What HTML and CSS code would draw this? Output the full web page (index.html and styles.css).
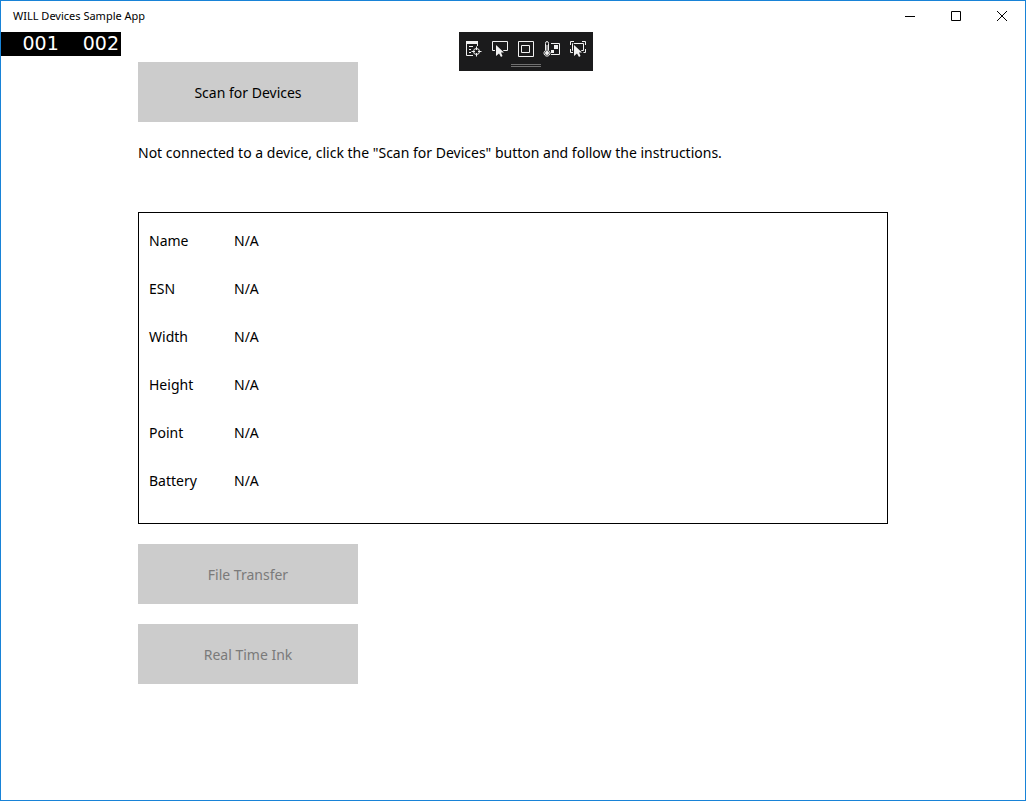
FILE: index.html
```html
<!DOCTYPE html>
<html lang="en">
<head>
<meta charset="utf-8">
<meta name="viewport" content="width=device-width, initial-scale=1">
<title>WILL Devices Sample App</title>
<link rel="stylesheet" href="styles.css">
</head>
<body>
<div class="window">
  <header class="titlebar">
    <h1 class="title">WILL Devices Sample App</h1>
    <div class="captions">
      <button class="caption" type="button" aria-label="Minimize">
        <svg width="10" height="10" viewBox="0 0 10 10"><path d="M0 5.5H10"/></svg>
      </button>
      <button class="caption" type="button" aria-label="Maximize">
        <svg width="10" height="10" viewBox="0 0 10 10"><path d="M.5 .5H9.5V9.5H.5Z"/></svg>
      </button>
      <button class="caption" type="button" aria-label="Close">
        <svg width="10" height="10" viewBox="0 0 10 10"><path d="M0 0L10 10M10 0L0 10"/></svg>
      </button>
    </div>
  </header>

  <div class="client">
    <div class="counters"><span>001</span><span>002</span></div>

    <div class="debugbar">
      <div class="tools">
        <button class="tool" type="button" aria-label="Go to live visual tree">
          <svg width="18" height="18" viewBox="0 0 18 18">
            <path class="fill" d="M2 1H14V4H2Z"/>
            <path d="M2.500 3V15.500H9M5 6.500H9M5 9.500H7M5 12.500H7M13.500 4V6"/>
            <circle cx="12.500" cy="11.500" r="3"/>
            <path d="M12.500 6.500V10M12.500 13V16.500M7.500 11.500H11M14 11.500H17.500"/>
          </svg>
        </button>
        <button class="tool" type="button" aria-label="Enable selection">
          <svg width="18" height="18" viewBox="0 0 18 18">
            <path d="M6 10.500H2.500V1.500H17.500V10.500H13"/>
            <path class="cursor" d="M6 5V16L9 13.500L11 17L12.500 16L11 12.500H14Z"/>
          </svg>
        </button>
        <button class="tool" type="button" aria-label="Display layout adorners">
          <svg width="18" height="18" viewBox="0 0 18 18">
            <path d="M2.500 1.500H17.500V16.500H2.500ZM5.500 5.500H13.500V12.500H5.500Z"/>
          </svg>
        </button>
        <button class="tool" type="button" aria-label="Show frame rate">
          <svg width="18" height="18" viewBox="0 0 18 18">
            <path d="M3.500 10.500V3.500Q3.500 1.500 5 1.500T6.500 3.500V10.500A3 3 0 1 1 3.500 10.500Z"/>
            <path d="M5 5V12M9 3.500H17.500V14.500H9"/>
            <circle class="fill" cx="5" cy="13" r="2"/>
            <path class="fill" d="M12 5H16V9H12ZM9 10H12V13H9Z"/>
          </svg>
        </button>
        <button class="tool" type="button" aria-label="Track focused element">
          <svg width="18" height="18" viewBox="0 0 18 18">
            <path d="M2.500 5V1.500H6M14 1.500H17.500V5M17.500 9V12.500H14M5 12.500H2.500V9M5 10.500H4.500V3.500H15.500V10.500H13"/>
            <path class="cursor" d="M6 5V16L9 13.500L11 17L12.500 16L11 12.500H14Z"/>
          </svg>
        </button>
      </div>
      <div class="grip"></div>
    </div>

    <main class="page">
      <button class="action" type="button">Scan for Devices</button>
      <p class="status">Not connected to a device, click the "Scan for Devices" button and follow the instructions.</p>
      <div class="details">
        <table class="properties">
          <tbody>
            <tr><th scope="row">Name</th><td>N/A</td></tr>
            <tr><th scope="row">ESN</th><td>N/A</td></tr>
            <tr><th scope="row">Width</th><td>N/A</td></tr>
            <tr><th scope="row">Height</th><td>N/A</td></tr>
            <tr><th scope="row">Point</th><td>N/A</td></tr>
            <tr><th scope="row">Battery</th><td>N/A</td></tr>
          </tbody>
        </table>
      </div>
      <button class="action" type="button" disabled>File Transfer</button>
      <button class="action" type="button" disabled>Real Time Ink</button>
    </main>
  </div>
</div>
</body>
</html>
```
FILE: styles.css
```css
* { box-sizing: border-box; }

body {
  margin: 0;
  background: #fff;
  color: #000;
  font: 14px/22px "Segoe UI", "Noto Sans", "Open Sans", sans-serif;
}

button {
  margin: 0;
  padding: 0;
  border: 0;
  font: inherit;
}

.window {
  min-height: 100vh;
  border: 1px solid #1883d7;
}

.titlebar {
  display: flex;
  justify-content: space-between;
  height: 31px;
  padding-left: 12px;
}

.title {
  margin: 0;
  font-size: 11px;
  font-weight: 400;
  line-height: 30px;
}

.captions { display: flex; }

.caption {
  display: flex;
  align-items: center;
  justify-content: center;
  width: 46px;
  height: 30px;
  background: transparent;
}

.caption svg {
  fill: none;
  stroke: #000;
}

.client { position: relative; }

/* Frame counters and debug toolbar float over the page */
.counters {
  position: absolute;
  top: 0;
  left: 0;
  display: flex;
  justify-content: flex-end;
  gap: 24px;
  width: 120px;
  padding: 0 2px 2px 0;
  background: #000;
  color: #fff;
  font: 19px/22px "DejaVu Sans", sans-serif;
}

.debugbar {
  position: absolute;
  top: 0;
  left: 50%;
  display: flex;
  flex-direction: column;
  align-items: center;
  width: 134px;
  height: 39px;
  margin-left: -54px;
  background: #1b1b1c;
}

.tools {
  display: flex;
  padding: 8px 2px 0 0;
}

.tool {
  display: flex;
  justify-content: center;
  width: 26px;
  height: 24px;
  background: transparent;
}

.tool svg {
  fill: none;
  stroke: #f1f1f1;
}

.tool .fill {
  fill: #f1f1f1;
  stroke: none;
}

.tool .cursor {
  fill: #f1f1f1;
  stroke: #1b1b1c;
  stroke-width: 2;
  paint-order: stroke;
}

.grip {
  width: 30px;
  height: 3px;
  border: solid #707070;
  border-width: 1px 0;
}

.page {
  display: flex;
  flex-direction: column;
  align-items: flex-start;
  gap: 20px;
  max-width: 750px;
  margin: 0 auto;
  padding: 30px 0;
}

.action {
  width: 220px;
  height: 60px;
  padding-top: 2px;
  background: #ccc;
  color: #000;
}

.action:disabled { color: #7a7a7a; }

.status { margin: 0 0 28px; }

.details {
  width: 100%;
  padding: 4px 10px 18px;
  border: 1px solid #000;
}

.properties {
  width: 100%;
  border-collapse: collapse;
  table-layout: fixed;
}

.properties th,
.properties td {
  height: 48px;
  padding: 0;
  font-weight: 400;
  text-align: left;
}

.properties th { width: 85px; }
```
